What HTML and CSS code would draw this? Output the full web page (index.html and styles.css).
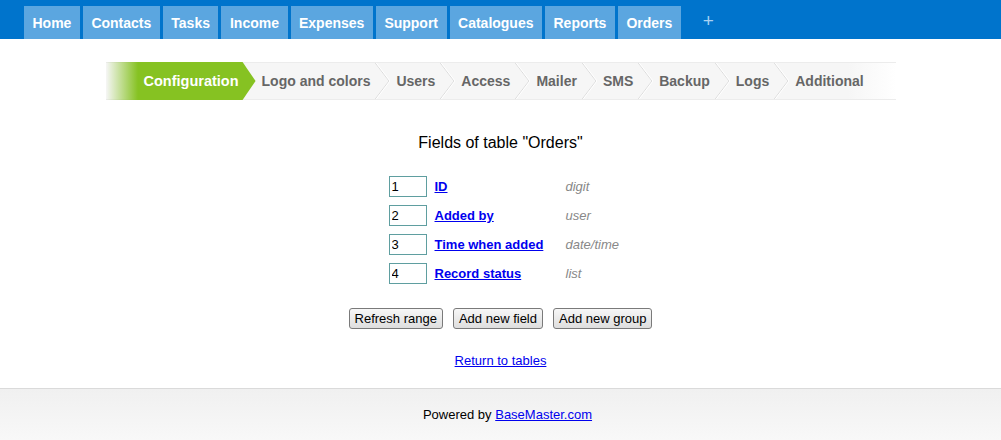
FILE: index.html
```html
<!DOCTYPE html>
<html lang="en">
<head>
  <meta charset="UTF-8">
  <title>Fields of table "Orders"</title>
  <link rel="stylesheet" href="styles.css">
</head>
<body>

  <div class="topbar">
    <a class="tab" href="#">Home</a>
    <a class="tab" href="#">Contacts</a>
    <a class="tab" href="#">Tasks</a>
    <a class="tab" href="#">Income</a>
    <a class="tab" href="#">Expenses</a>
    <a class="tab" href="#">Support</a>
    <a class="tab" href="#">Catalogues</a>
    <a class="tab" href="#">Reports</a>
    <a class="tab" href="#">Orders</a>
    <a class="tab-add" href="#">+</a>
  </div>

  <div class="steps">
    <span class="step current">Configuration</span>
    <span class="step">Logo and colors</span>
    <span class="sep"><svg width="16" height="38" viewBox="0 0 16 38"><polyline points="0.5,0 15,19 0.5,38" fill="none" stroke="#dcdcdc" stroke-width="1"/><polyline points="1.5,0 16,19 1.5,38" fill="none" stroke="#ffffff" stroke-width="1"/></svg></span>
    <span class="step">Users</span>
    <span class="sep"><svg width="16" height="38" viewBox="0 0 16 38"><polyline points="0.5,0 15,19 0.5,38" fill="none" stroke="#dcdcdc" stroke-width="1"/><polyline points="1.5,0 16,19 1.5,38" fill="none" stroke="#ffffff" stroke-width="1"/></svg></span>
    <span class="step">Access</span>
    <span class="sep"><svg width="16" height="38" viewBox="0 0 16 38"><polyline points="0.5,0 15,19 0.5,38" fill="none" stroke="#dcdcdc" stroke-width="1"/><polyline points="1.5,0 16,19 1.5,38" fill="none" stroke="#ffffff" stroke-width="1"/></svg></span>
    <span class="step">Mailer</span>
    <span class="sep"><svg width="16" height="38" viewBox="0 0 16 38"><polyline points="0.5,0 15,19 0.5,38" fill="none" stroke="#dcdcdc" stroke-width="1"/><polyline points="1.5,0 16,19 1.5,38" fill="none" stroke="#ffffff" stroke-width="1"/></svg></span>
    <span class="step">SMS</span>
    <span class="sep"><svg width="16" height="38" viewBox="0 0 16 38"><polyline points="0.5,0 15,19 0.5,38" fill="none" stroke="#dcdcdc" stroke-width="1"/><polyline points="1.5,0 16,19 1.5,38" fill="none" stroke="#ffffff" stroke-width="1"/></svg></span>
    <span class="step">Backup</span>
    <span class="sep"><svg width="16" height="38" viewBox="0 0 16 38"><polyline points="0.5,0 15,19 0.5,38" fill="none" stroke="#dcdcdc" stroke-width="1"/><polyline points="1.5,0 16,19 1.5,38" fill="none" stroke="#ffffff" stroke-width="1"/></svg></span>
    <span class="step">Logs</span>
    <span class="sep"><svg width="16" height="38" viewBox="0 0 16 38"><polyline points="0.5,0 15,19 0.5,38" fill="none" stroke="#dcdcdc" stroke-width="1"/><polyline points="1.5,0 16,19 1.5,38" fill="none" stroke="#ffffff" stroke-width="1"/></svg></span>
    <span class="step">Additional</span>
  </div>

  <h2 class="title">Fields of table "Orders"</h2>

  <div class="fields">
    <input class="order" type="text" value="1">
    <a class="field-name" href="#">ID</a>
    <span class="field-type">digit</span>

    <input class="order" type="text" value="2">
    <a class="field-name" href="#">Added by</a>
    <span class="field-type">user</span>

    <input class="order" type="text" value="3">
    <a class="field-name" href="#">Time when added</a>
    <span class="field-type">date/time</span>

    <input class="order" type="text" value="4">
    <a class="field-name" href="#">Record status</a>
    <span class="field-type">list</span>
  </div>

  <div class="actions">
    <button>Refresh range</button>
    <button>Add new field</button>
    <button>Add new group</button>
  </div>

  <div class="back">
    <a href="#">Return to tables</a>
  </div>

  <div class="footer">
    Powered by <a href="#">BaseMaster.com</a>
  </div>

</body>
</html>
```

FILE: styles.css
```css
body {
  margin: 0;
  font-family: "Liberation Sans", Arial, sans-serif;
  font-size: 13px;
  color: #000;
  background: #fff;
}

/* top menu */
.topbar {
  display: flex;
  align-items: flex-end;
  gap: 3px;
  height: 39px;
  padding-left: 24px;
  background-color: #0074cc;
}

.tab {
  display: block;
  height: 33px;
  line-height: 34px;
  padding: 0 8.5px;
  background-color: #5ba6e0;
  color: #fff;
  font-weight: bold;
  font-size: 14px;
  text-decoration: none;
}

.tab-add {
  height: 33px;
  line-height: 30px;
  margin-left: 19px;
  color: #a9d2f3;
  font-size: 19px;
  text-decoration: none;
}

/* wizard steps */
.steps {
  display: flex;
  align-items: center;
  width: 790px;
  height: 38px;
  margin: 23px auto 0;
  background: linear-gradient(to right, #f6f6f6 0, #f6f6f6 94%, rgba(246, 246, 246, 0) 100%);
  border-top: 1px solid #ececec;
  border-bottom: 1px solid #ececec;
  box-sizing: border-box;
  font-size: 14px;
  font-weight: bold;
  color: #666;
}

.step {
  line-height: 36px;
}

.step.current {
  align-self: stretch;
  height: 38px;
  margin: -1px 6px -1px 0;
  padding: 0 17px 0 38px;
  line-height: 38px;
  font-size: 14.5px;
  color: #fff;
  background: linear-gradient(to right, rgba(134, 194, 34, 0) 0, #86c222 32px);
  clip-path: polygon(0 0, calc(100% - 13px) 0, 100% 50%, calc(100% - 13px) 100%, 0 100%);
}

.sep {
  display: block;
  height: 36px;
  margin: 0 6px 0 4px;
  overflow: hidden;
}

.sep svg {
  display: block;
  margin-top: -1px;
}

/* fields */
.title {
  margin: 34px 0 0;
  font-size: 16px;
  font-weight: normal;
  text-align: center;
  line-height: 18px;
}

.fields {
  display: grid;
  grid-template-columns: 46px 131px 55px;
  row-gap: 8px;
  align-items: center;
  width: 232px;
  margin: 24px auto 0;
  padding-left: 8px;
}

.order {
  width: 38px;
  height: 21px;
  box-sizing: border-box;
  margin: 0;
  padding: 1px 2px;
  border: 1px solid #5f9ea0;
  font-family: "Liberation Sans", Arial, sans-serif;
  font-size: 13px;
}

.field-name {
  color: #0000ee;
  font-weight: bold;
}

.field-type {
  color: #888;
  font-style: italic;
  white-space: nowrap;
}

.actions {
  display: flex;
  justify-content: center;
  gap: 10px;
  margin-top: 24px;
}

button {
  height: 21px;
  padding: 0 5px;
  border: 1px solid #7a7a7a;
  border-radius: 3px;
  background: linear-gradient(#f7f7f7, #dedede);
  font-family: "Liberation Sans", Arial, sans-serif;
  font-size: 13px;
  color: #000;
}

.back {
  margin-top: 24px;
  text-align: center;
}

.back a,
.footer a {
  color: #0000ee;
}

.footer {
  margin-top: 20px;
  height: 51px;
  line-height: 52px;
  padding-left: 14px;
  border-top: 1px solid #dadada;
  background: linear-gradient(#f0f0f0, #f8f8f8);
  text-align: center;
}
```
